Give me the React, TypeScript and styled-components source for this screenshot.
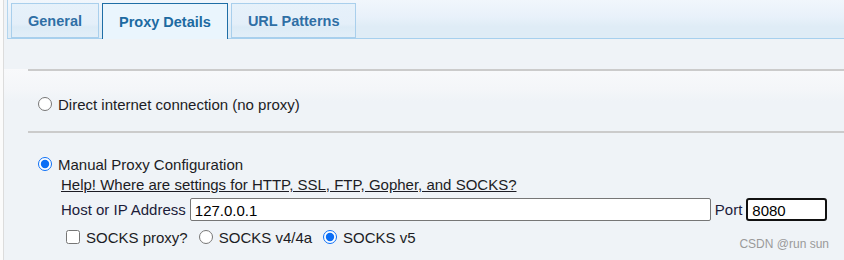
import React from 'react'
import styled, { createGlobalStyle } from 'styled-components'

const GlobalStyle = createGlobalStyle`
  html, body {
    margin: 0;
    padding: 0;
    background: #fbfbfb;
  }
  body {
    font-family: 'Liberation Sans', Arial, sans-serif;
  }
`

type Tab = { label: string; active?: boolean }

const tabs: Tab[] = [
  { label: 'General' },
  { label: 'Proxy Details', active: true },
  { label: 'URL Patterns' },
]

export default function App() {
  return (
    <>
      <GlobalStyle />
      <Page>
        <TabBar>
          {tabs.map(tab => (
            <TabButton key={tab.label} $active={tab.active}>
              {tab.label}
            </TabButton>
          ))}
        </TabBar>
        <Panel>
          <Rule />
          <OptionRow>
            <Radio type="radio" name="mode" readOnly />
            <OptionLabel>Direct internet connection (no proxy)</OptionLabel>
          </OptionRow>
          <Rule $top={18} />
          <OptionRow $top={22}>
            <Radio type="radio" name="mode" checked readOnly />
            <OptionLabel>Manual Proxy Configuration</OptionLabel>
          </OptionRow>
          <Manual>
            <HelpLink href="#">
              Help! Where are settings for HTTP, SSL, FTP, Gopher, and SOCKS?
            </HelpLink>
            <HostRow>
              <FieldLabel>Host or IP Address</FieldLabel>
              <TextInput defaultValue="127.0.0.1" $width={521} />
              <FieldLabel>Port</FieldLabel>
              <TextInput defaultValue="8080" $width={81} $focused />
            </HostRow>
            <SocksRow>
              <Check type="checkbox" readOnly />
              <SmallLabel>SOCKS proxy?</SmallLabel>
              <SmallRadio type="radio" name="socks" readOnly />
              <SmallLabel>SOCKS v4/4a</SmallLabel>
              <SmallRadio type="radio" name="socks" checked readOnly />
              <SmallLabel>SOCKS v5</SmallLabel>
              <Watermark>CSDN @run sun</Watermark>
            </SocksRow>
          </Manual>
        </Panel>
      </Page>
    </>
  )
}

const Page = styled.div`
  margin-left: 3px;
  border-left: 1px solid #dcdcdc;
  height: 260px;
  background: #eff3f7;
  overflow: hidden;
`

const TabBar = styled.div`
  display: flex;
  align-items: flex-end;
  gap: 3px;
  height: 38px;
  margin-left: 3px;
  padding-left: 3px;
  border-left: 1px solid #b3d5ee;
  border-bottom: 1px solid #a7d0ee;
  background: linear-gradient(#f1f6fc 0%, #e8f1fa 45%, #dfecf6 70%, #dfecf6 100%);
`

const TabButton = styled.div<{ $active?: boolean }>`
  box-sizing: border-box;
  height: ${p => (p.$active ? 36 : 35)}px;
  margin-bottom: ${p => (p.$active ? -1 : 0)}px;
  padding: 0 16px;
  display: flex;
  align-items: center;
  font-size: 14.5px;
  font-weight: bold;
  color: ${p => (p.$active ? '#1d6aa1' : '#2f6fa5')};
  border: 1px solid ${p => (p.$active ? '#1f6ea6' : '#a9cfec')};
  border-bottom: ${p => (p.$active ? 'none' : '1px solid #a9cfec')};
  background: ${p =>
    p.$active
      ? '#eaf5fd'
      : 'linear-gradient(#e6f1fa 0%, #e4eff9 60%, #dcebf6 70%, #e2eef8 100%)'};
  &:first-child {
    padding: 0 16px;
  }
`

const Panel = styled.div`
  padding-left: 24px;
  background: linear-gradient(#f8f9fb 0px, #f4f6f9 20px, #eff3f7 32px);
`

const Rule = styled.div<{ $top?: number }>`
  height: 2px;
  background: #cbcbcb;
  margin-top: ${p => p.$top ?? 30}px;
`

const OptionRow = styled.div<{ $top?: number }>`
  display: flex;
  align-items: center;
  margin-top: ${p => p.$top ?? 24}px;
  height: 18px;
  padding-left: 10px;
`

const Radio = styled.input`
  width: 14px;
  height: 14px;
  margin: 0 6px 0 0;
  accent-color: #0b6ef5;
`

const OptionLabel = styled.span`
  font-size: 15px;
  color: #1c1c24;
`

const Manual = styled.div`
  padding-left: 33px;
`

const HelpLink = styled.a`
  display: block;
  margin-top: 3px;
  font-size: 15px;
  line-height: 18px;
  color: #1c1c24;
  text-decoration: underline;
`

const HostRow = styled.div`
  display: flex;
  align-items: center;
  gap: 4px;
  margin-top: 4px;
  height: 23px;
`

const FieldLabel = styled.span`
  font-size: 15px;
  color: #1c1c3a;
`

const TextInput = styled.input<{ $width: number; $focused?: boolean }>`
  box-sizing: border-box;
  width: ${p => p.$width}px;
  height: 23px;
  padding: 1px 4px 0;
  font-family: 'Liberation Sans', Arial, sans-serif;
  font-size: 15px;
  color: #000;
  background: #fff;
  border: ${p => (p.$focused ? '2px solid #111' : '1px solid #767676')};
  border-radius: ${p => (p.$focused ? 3 : 2)}px;
  outline: none;
`

const SocksRow = styled.div`
  display: flex;
  align-items: center;
  margin-top: 7px;
  padding-left: 5px;
  height: 18px;
`

const Check = styled.input`
  width: 14px;
  height: 14px;
  margin: 0 6px 0 0;
`

const SmallRadio = styled.input`
  width: 14px;
  height: 14px;
  margin: 0 6px 0 11px;
  accent-color: #0b6ef5;
`

const SmallLabel = styled.span`
  font-size: 15px;
  color: #1c1c24;
`

const Watermark = styled.span`
  margin-left: auto;
  margin-right: 15px;
  margin-top: 14px;
  font-size: 12px;
  color: #9a9a9a;
`
